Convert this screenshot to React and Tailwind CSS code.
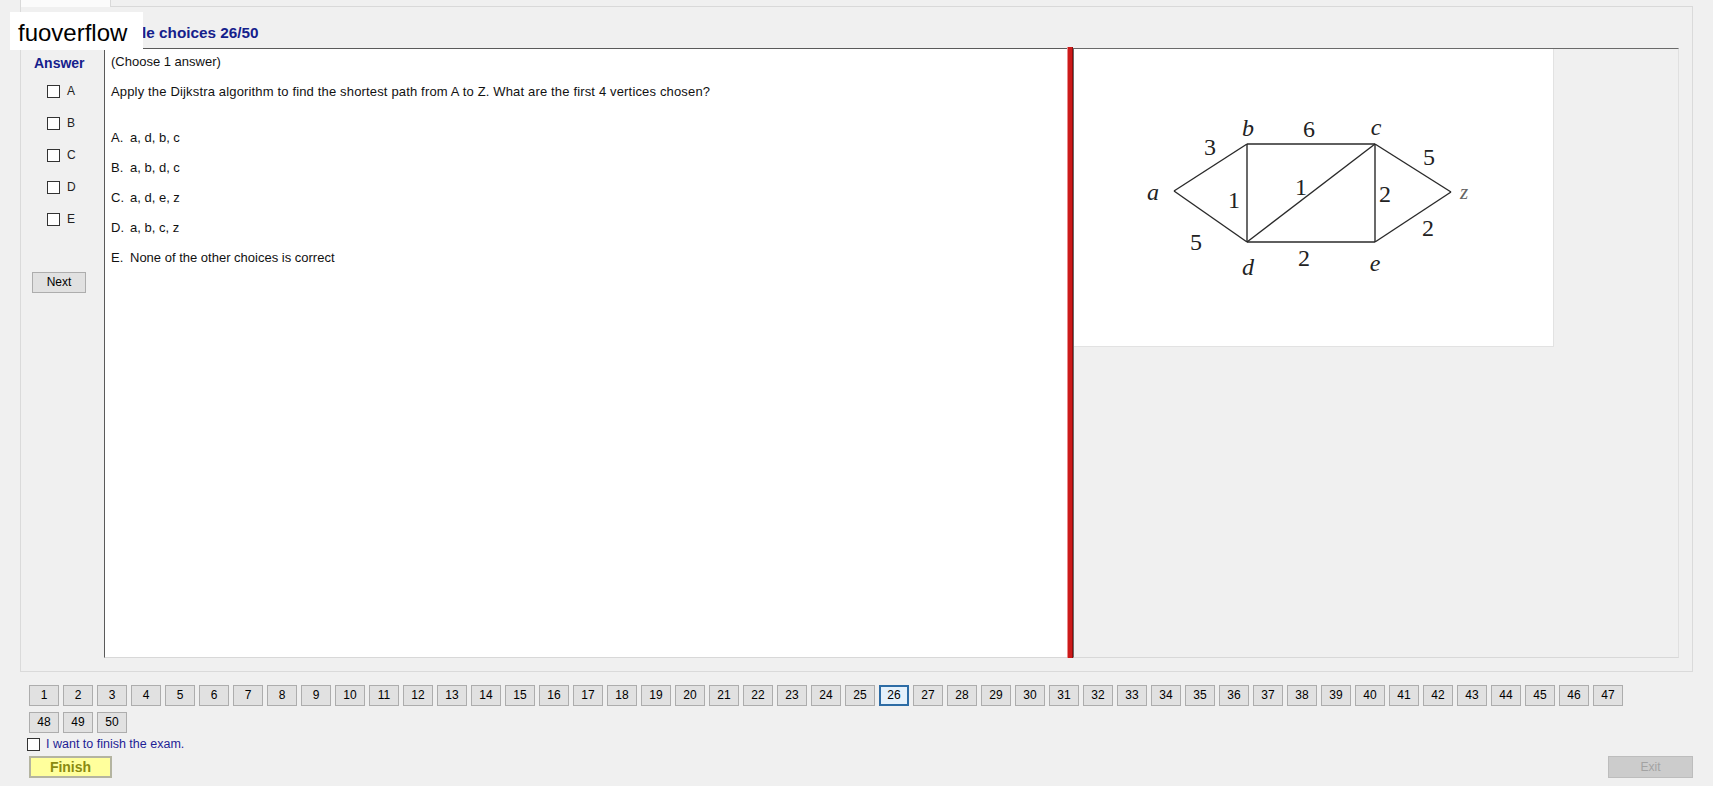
import React from "react";

const letters = ["A", "B", "C", "D", "E"];
const options = [
  ["A.", "a, d, b, c"],
  ["B.", "a, b, d, c"],
  ["C.", "a, d, e, z"],
  ["D.", "a, b, c, z"],
  ["E.", "None of the other choices is correct"],
];

const vertices = {
  a: [100, 141],
  b: [173, 94],
  c: [301, 94],
  d: [173, 192],
  e: [301, 192],
  z: [377, 142],
};
const edges = [
  ["a", "b"], ["a", "d"], ["b", "c"], ["b", "d"], ["d", "c"],
  ["c", "e"], ["d", "e"], ["c", "z"], ["e", "z"],
];
const names = [
  ["a", 79, 142], ["b", 174, 78], ["c", 302, 77], ["d", 174, 217], ["e", 301, 213], ["z", 390, 142],
];
const weights = [
  ["3", 136, 97], ["6", 235, 79], ["5", 355, 107], ["1", 160, 150], ["1", 227, 137],
  ["2", 311, 144], ["2", 354, 178], ["5", 122, 192], ["2", 230, 208],
];

function Box() {
  return <span className="block w-[13px] h-[13px] border border-[#333333] bg-white shrink-0" />;
}

function Graph() {
  return (
    <svg width="480" height="295" viewBox="0 0 480 295">
      {edges.map(([p, q]) => (
        <line key={p + q} x1={vertices[p][0]} y1={vertices[p][1]} x2={vertices[q][0]} y2={vertices[q][1]} stroke="#2a2a2a" strokeWidth="1.4" />
      ))}
      {names.map(([t, x, y]) => (
        <text key={t} x={x} y={y} textAnchor="middle" dominantBaseline="central" fontFamily="'Liberation Serif', serif" fontStyle="italic" fontSize={t === "z" ? 21 : 24} fill={t === "z" ? "#666" : "#222"}>
          {t}
        </text>
      ))}
      {weights.map(([t, x, y], i) => (
        <text key={i} x={x} y={y} textAnchor="middle" dominantBaseline="central" fontFamily="'Liberation Serif', serif" fontSize="24" fill="#222">
          {t}
        </text>
      ))}
    </svg>
  );
}

export default function App() {
  const current = 26;
  return (
    <div className="relative w-[1713px] h-[786px] overflow-hidden bg-[#f0f0f0] font-['Liberation_Sans',Arial,sans-serif] text-black">
      {/* tab strip */}
      <div className="flex h-[7px]">
        <div className="w-[20px]" />
        <div className="w-[91px] h-[7px] bg-[#fbfbfb] border-x border-[#d9d9d9]" />
        <div className="w-[1582px] border-b border-[#d9d9d9]" />
      </div>

      {/* tab page */}
      <div className="ml-[20px] w-[1673px] h-[665px] border-x border-b border-[#dadada] flex flex-col">
        <div className="h-[41px] pt-[17px] pl-[76px] text-[15.3px] leading-[18px] font-bold text-[#15208c]">
          Multiple choices 26/50
        </div>

        <div className="flex h-[610px]">
          {/* answer column */}
          <div className="w-[83px] flex flex-col">
            <div className="pt-[7px] pl-[13px] text-[14px] leading-[17px] font-bold text-[#15208c]">Answer</div>
            <div className="mt-[3px] flex flex-col">
              {letters.map((l) => (
                <div key={l} className="h-[32px] flex items-center pl-[26px] gap-[7px] text-[12px]">
                  <Box />
                  <span className="text-[#222]">{l}</span>
                </div>
              ))}
            </div>
            <button className="mt-[37px] ml-[11px] w-[54px] h-[21px] bg-[#e1e1e1] border border-[#adadad] text-[12px] leading-[19px] text-black">
              Next
            </button>
          </div>

          {/* question text */}
          <div className="w-[963px] h-[610px] bg-white border-l border-t border-[#5a5a5a] border-b border-b-[#d8d8d8] pl-[6px] text-[13px] leading-[16px] text-[#111]">
            <div className="pt-[5px]">(Choose 1 answer)</div>
            <div className="mt-[14px] tracking-[0.16px]">
              Apply the Dijkstra algorithm to find the shortest path from A to Z. What are the first 4 vertices chosen?
            </div>
            <div className="mt-[30px] flex flex-col gap-[14px]">
              {options.map(([k, t]) => (
                <div key={k} className="flex">
                  <span className="w-[19px]">{k}</span>
                  <span>{t}</span>
                </div>
              ))}
            </div>
          </div>

          {/* splitter */}
          <div className="w-[6px] h-[611px] -mt-[1px] bg-[#cc1a1a] border-l border-l-[#e98a8a] border-r border-r-[#8e0c0c]" />

          {/* picture pane */}
          <div className="w-[606px] h-[610px] border-l border-t border-[#6a6a6a] border-r border-r-[#e0e0e0] border-b border-b-[#d8d8d8]">
            <div className="w-[480px] h-[298px] bg-white border-r border-b border-[#e2e2e2] pt-[1px]">
              <Graph />
            </div>
          </div>
        </div>
      </div>

      {/* question navigator */}
      <div className="mt-[13px] ml-[29px] w-[1610px] flex flex-wrap gap-x-[4px] gap-y-[6px]">
        {Array.from({ length: 50 }, (_, i) => i + 1).map((n) => (
          <button
            key={n}
            className={
              n === current
                ? "w-[30px] h-[21px] bg-[#e5f1fb] border-2 border-[#2d6ca5] text-[12px] leading-[17px] text-black"
                : "w-[30px] h-[21px] bg-[#e1e1e1] border border-[#adadad] text-[12px] leading-[19px] text-black"
            }
          >
            {n}
          </button>
        ))}
      </div>

      <div className="mt-[5px] ml-[27px] flex items-center gap-[6px] h-[13px]">
        <Box />
        <span className="text-[12.5px] leading-[13px] text-[#1e1e96]">I want to finish the exam.</span>
      </div>

      <div className="mt-[5px] flex justify-between items-start">
        <button className="ml-[29px] w-[83px] h-[22px] bg-[#ffff9c] border-2 border-[#b4b4a0] text-[14px] leading-[18px] font-bold text-[#8a8a10]">
          Finish
        </button>
        <button className="mr-[20px] w-[85px] h-[22px] bg-[#cccccc] border border-[#bdbdbd] text-[12px] leading-[20px] text-[#a3a3a3]" disabled>
          Exit
        </button>
      </div>

      {/* watermark overlay */}
      <div className="absolute left-[10px] top-[12px] w-[133px] h-[38px] bg-white pl-[8px] pt-[4px] text-[24px] leading-[34px] text-black font-['Liberation_Sans',Arial,sans-serif]">
        fuoverflow
      </div>
    </div>
  );
}
